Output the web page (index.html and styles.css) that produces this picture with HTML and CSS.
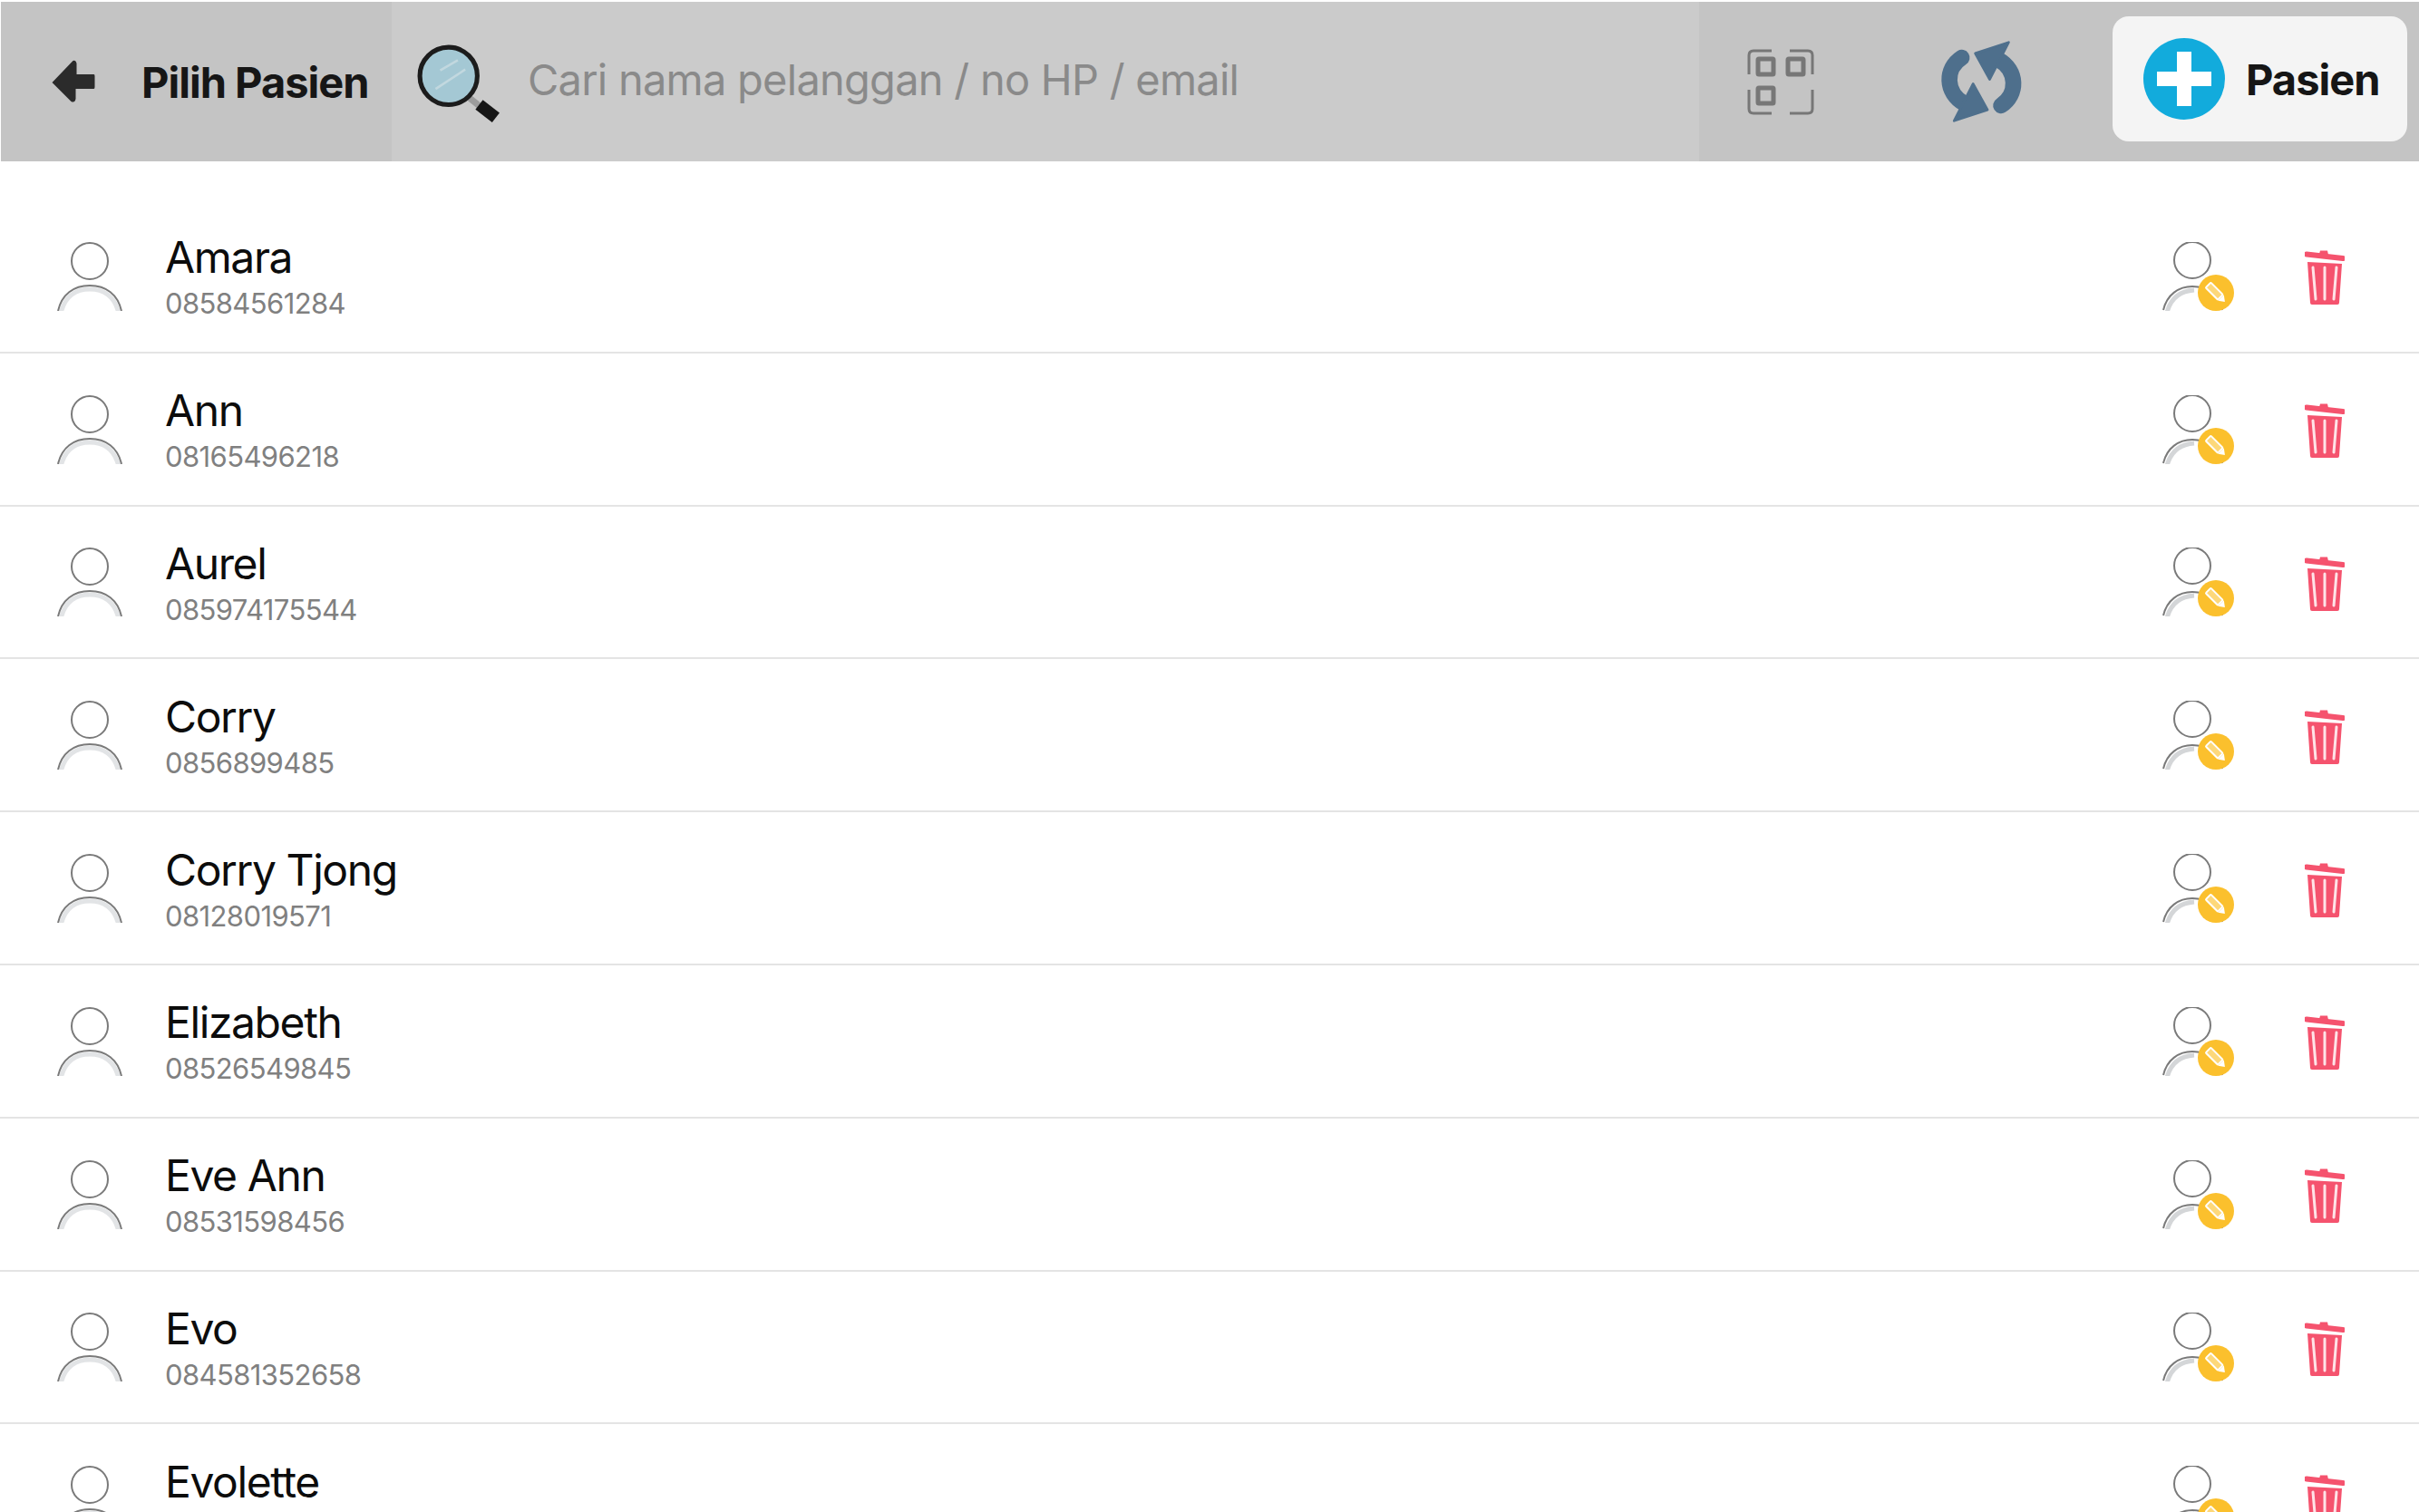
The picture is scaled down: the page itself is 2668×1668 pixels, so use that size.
FILE: index.html
```html
<!DOCTYPE html>
<html lang="en">
  <head>
    <meta charset="UTF-8" />
    <meta name="viewport" content="width=device-width, initial-scale=1.0" />
    <title>Pilih Pasien</title>
    <link rel="stylesheet" href="styles.css">
  </head>
  <body>
    <svg class="sprites" width="0" height="0">
      <symbol id="person" viewBox="0 0 72 76">
        <path d="M4 76C8 58 20 49 36 49S64 58 68 76" fill="none" stroke="#e2e4e6" stroke-width="5" transform="translate(0 3)"/>
        <circle cx="36" cy="21" r="20" fill="#fff" stroke="#7a7a7a" stroke-width="2"/>
        <path d="M1 76C5 58 18 48 36 48S67 58 71 76" fill="none" stroke="#7a7a7a" stroke-width="2"/>
      </symbol>
      <symbol id="person-edit" viewBox="0 0 80 76">
        <path d="M3 76C7 60 18 52 33 51" fill="none" stroke="#d4d6d8" stroke-width="5" transform="translate(2 2)"/>
        <circle cx="33" cy="20" r="20" fill="#fff" stroke="#7a7a7a" stroke-width="2"/>
        <path d="M1 75C5 58 18 49 33 49S60 56 66 75" fill="none" stroke="#7a7a7a" stroke-width="2"/>
        <circle cx="59" cy="56" r="20" fill="#fbc02d"/>
        <g transform="rotate(45 59 56)">
          <rect x="47" y="52" width="19" height="8" rx="1" fill="#fdd87a" stroke="#fff" stroke-width="2"/>
          <path d="M67 51.500L73 56L67 60.500Z" fill="#fff"/>
        </g>
      </symbol>
      <symbol id="trash" viewBox="0 0 44 61">
        <path d="M16 5L17 1.500L25 1.500L26 6" fill="#f5536e"/>
        <path d="M2 5.500L42 10" stroke="#f5536e" stroke-width="6" stroke-linecap="round"/>
        <path d="M3 14L41 16L38 59Q38 61 36 61H8Q6 61 6 59Z" fill="#f5536e"/>
        <path d="M9 20L12 55M22 20V55M35 20L32 55" stroke="#ffe3e7" stroke-width="3" stroke-linecap="round"/>
      </symbol>
    </svg>

    <div class="topbar">
      <div class="back">
        <svg class="back-icon" viewBox="0 0 48 48">
          <path d="M1 25L24 1Q27 0 28 4V16H47Q48 16 48 18V30Q48 32 47 32H27V43Q26 48 22 46Z" fill="#2b2b2b"/>
        </svg>
        <h1>Pilih Pasien</h1>
      </div>
      <div class="search">
        <svg class="search-icon" viewBox="0 0 92 85">
          <path d="M52 54L68 67" stroke="#9c9c9c" stroke-width="7"/>
          <path d="M67 65L85 79" stroke="#161616" stroke-width="13"/>
          <circle cx="34" cy="34" r="31" fill="#a4c8d4" stroke="#1c1c1c" stroke-width="5"/>
          <path d="M25 28L44 17M20 48L52 27" stroke="#c2d8df" stroke-width="2.500"/>
        </svg>
        <span class="search-text">Cari nama pelanggan / no HP / email</span>
      </div>
      <div class="tools">
        <svg class="scan-icon" viewBox="0 0 74 73" fill="none" stroke="#777" stroke-width="3">
          <path d="M2 28V7Q2 2 7 2H27M47 2H67Q72 2 72 7V28M2 45V66Q2 71 7 71H27M47 71H67Q72 71 72 66V45"/>
          <rect x="12" y="11" width="17" height="17" rx="1" stroke-width="5"/>
          <rect x="45" y="11" width="17" height="17" rx="1" stroke-width="5"/>
          <rect x="12" y="43" width="17" height="17" rx="1" stroke-width="5"/>
        </svg>
        <svg class="sync-icon" viewBox="30 42 272 272" fill="#4e6f8c">
          <g id="sync-half">
            <path d="M103 100C48 135 48 215 112 250" fill="none" stroke="#4e6f8c" stroke-width="52" stroke-linecap="round"/>
            <path d="M140 185L187 270L78 306Z" stroke="#4e6f8c" stroke-width="8" stroke-linejoin="round"/>
          </g>
          <use href="#sync-half" transform="rotate(180 167 178)"/>
        </svg>
        <button class="add-btn">
          <svg class="plus-icon" viewBox="0 0 90 90">
            <circle cx="45" cy="45" r="45" fill="#12abdc"/>
            <path d="M37 15H53V37H75V53H53V75H37V53H15V37H37Z" fill="#fff"/>
          </svg>
          Pasien
        </button>
      </div>
    </div>

    <div class="list">
      <div class="row">
        <svg class="person"><use href="#person"/></svg>
        <div class="info"><div class="name">Amara</div><div class="phone">08584561284</div></div>
        <svg class="edit"><use href="#person-edit"/></svg>
        <svg class="del"><use href="#trash"/></svg>
      </div>
      <div class="row">
        <svg class="person"><use href="#person"/></svg>
        <div class="info"><div class="name">Ann</div><div class="phone">08165496218</div></div>
        <svg class="edit"><use href="#person-edit"/></svg>
        <svg class="del"><use href="#trash"/></svg>
      </div>
      <div class="row">
        <svg class="person"><use href="#person"/></svg>
        <div class="info"><div class="name">Aurel</div><div class="phone">085974175544</div></div>
        <svg class="edit"><use href="#person-edit"/></svg>
        <svg class="del"><use href="#trash"/></svg>
      </div>
      <div class="row">
        <svg class="person"><use href="#person"/></svg>
        <div class="info"><div class="name">Corry</div><div class="phone">0856899485</div></div>
        <svg class="edit"><use href="#person-edit"/></svg>
        <svg class="del"><use href="#trash"/></svg>
      </div>
      <div class="row">
        <svg class="person"><use href="#person"/></svg>
        <div class="info"><div class="name">Corry Tjong</div><div class="phone">08128019571</div></div>
        <svg class="edit"><use href="#person-edit"/></svg>
        <svg class="del"><use href="#trash"/></svg>
      </div>
      <div class="row">
        <svg class="person"><use href="#person"/></svg>
        <div class="info"><div class="name">Elizabeth</div><div class="phone">08526549845</div></div>
        <svg class="edit"><use href="#person-edit"/></svg>
        <svg class="del"><use href="#trash"/></svg>
      </div>
      <div class="row">
        <svg class="person"><use href="#person"/></svg>
        <div class="info"><div class="name">Eve Ann</div><div class="phone">08531598456</div></div>
        <svg class="edit"><use href="#person-edit"/></svg>
        <svg class="del"><use href="#trash"/></svg>
      </div>
      <div class="row">
        <svg class="person"><use href="#person"/></svg>
        <div class="info"><div class="name">Evo</div><div class="phone">084581352658</div></div>
        <svg class="edit"><use href="#person-edit"/></svg>
        <svg class="del"><use href="#trash"/></svg>
      </div>
      <div class="row">
        <svg class="person"><use href="#person"/></svg>
        <div class="info"><div class="name">Evolette</div></div>
        <svg class="edit"><use href="#person-edit"/></svg>
        <svg class="del"><use href="#trash"/></svg>
      </div>
    </div>
  </body>
</html>
```

FILE: styles.css
```css
html,
body {
  height: 100%;
  overflow: hidden;
}
body {
  margin: 0;
  background: #fff;
  font-family: Inter, Roboto, "Liberation Sans", sans-serif;
}
.sprites {
  display: block;
}
.topbar {
  display: flex;
  height: 176px;
  margin: 2px 0 0 1px;
  background: #c4c4c4;
}
.back {
  display: flex;
  align-items: center;
  width: 431px;
  padding-left: 55px;
  box-sizing: border-box;
}
.back-icon {
  width: 49px;
  height: 48px;
  margin-right: 51px;
}
.back h1 {
  margin: 0;
  font-size: 47px;
  font-weight: 700;
  letter-spacing: -1px;
  color: #161616;
  white-space: nowrap;
}
.search {
  flex: 1;
  display: flex;
  align-items: center;
  background: #cbcbcb;
}
.search-icon {
  width: 94px;
  height: 87px;
  margin: 4px 28px 0 28px;
}
.search-text {
  margin-bottom: 5px;
  font-size: 47px;
  letter-spacing: -0.760px;
  color: #8a8a8a;
  white-space: nowrap;
}
.tools {
  display: flex;
  align-items: center;
  width: 794px;
  box-sizing: border-box;
  padding-left: 53px;
}
.scan-icon {
  width: 74px;
  height: 73px;
  margin-right: 138px;
}
.sync-icon {
  width: 92px;
  height: 92px;
  margin-right: 99px;
}
.add-btn {
  display: flex;
  align-items: center;
  width: 325px;
  height: 138px;
  margin-bottom: 6px;
  padding: 0 0 0 34px;
  border: none;
  border-radius: 18px;
  background: #f4f4f4;
  font-family: inherit;
  font-size: 47px;
  font-weight: 700;
  letter-spacing: -1px;
  color: #161616;
}
.plus-icon {
  width: 90px;
  height: 90px;
  margin-right: 23px;
}
.list {
  padding-top: 43px;
}
.row {
  display: flex;
  align-items: center;
  height: 168.800px;
  box-sizing: border-box;
  padding: 0 82px 0 63px;
  border-bottom: 2px solid #e4e4e4;
}
.person {
  width: 72px;
  height: 76px;
  margin-top: 1px;
}
.info {
  height: 96px;
  margin-left: 47px;
}
.name {
  font-size: 48px;
  line-height: 55px;
  letter-spacing: -1.400px;
  color: #0c0c0c;
}
.phone {
  font-size: 31px;
  line-height: 48px;
  letter-spacing: -0.600px;
  color: #808080;
}
.edit {
  width: 80px;
  height: 76px;
  margin-top: 1px;
  margin-left: auto;
}
.del {
  width: 44px;
  height: 61px;
  margin-top: 3px;
  margin-left: 77px;
}
```
